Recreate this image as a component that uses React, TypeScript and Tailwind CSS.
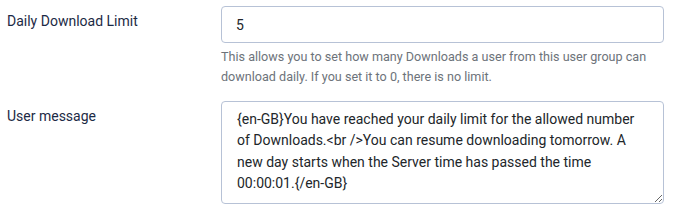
export default function App() {
  return (
    <div className="h-[209px] w-[675px] bg-white font-['Roboto',sans-serif]">
      <div className="flex pt-[6px]">
        <label className="w-[214px] pl-[7px] pt-[5px] text-[14px] leading-[20px] text-[#1c2a45]">
          Daily Download Limit
        </label>
        <div className="w-[443px] pl-[7px]">
          <input
            className="h-[37px] w-[443px] rounded-[4px] border border-[#b7c2d6] bg-white px-[14px] text-[14px] text-[#22262a] outline-none"
            defaultValue="5"
            type="text"
          />
          <p className="mt-[4px] text-[12.6px] leading-[20px] text-[#6d737a]">
            This allows you to set how many Downloads a user from this user group can download daily. If you set it to 0, there is no limit.
          </p>
        </div>
      </div>
      <div className="mt-[14px] flex">
        <label className="w-[214px] pl-[7px] pt-[5px] text-[14px] leading-[20px] text-[#1c2a45]">
          User message
        </label>
        <div className="w-[443px] pl-[7px]">
          <textarea
            className="block h-[103px] w-[443px] resize-y rounded-[4px] border border-[#b7c2d6] bg-white px-[15px] pt-[7px] text-[14px] leading-[21.3px] text-[#22262a] outline-none"
            defaultValue="{en-GB}You have reached your daily limit for the allowed number of Downloads.<br />You can resume downloading tomorrow. A new day starts when the Server time has passed the time 00:00:01.{/en-GB}"
          />
        </div>
      </div>
    </div>
  );
}
